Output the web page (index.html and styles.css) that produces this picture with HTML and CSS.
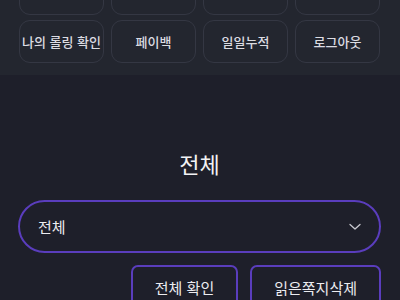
FILE: index.html
```html
<!DOCTYPE html>
<html lang="ko">
<head>
<meta charset="utf-8">
<link rel="stylesheet" href="styles.css">
</head>
<body>
<div class="menu">
  <div class="grid">
    <div class="item item-hidden"></div>
    <div class="item item-hidden"></div>
    <div class="item item-hidden"></div>
    <div class="item item-hidden"></div>
    <div class="item">나의 롤링 확인</div>
    <div class="item">페이백</div>
    <div class="item">일일누적</div>
    <div class="item">로그아웃</div>
  </div>
</div>
<div class="content">
  <h1 class="title">전체</h1>
  <div class="select">
    <span class="select-text">전체</span>
    <svg class="chevron" width="12" height="8" viewBox="0 0 12 8"><path d="M1 1.5 L6 6 L11 1.5" fill="none" stroke="#c8c8d0" stroke-width="1.3" stroke-linecap="round" stroke-linejoin="round"/></svg>
  </div>
  <div class="actions">
    <button class="btn">전체 확인</button>
    <button class="btn">읽은쪽지삭제</button>
  </div>
</div>
</body>
</html>
```
FILE: styles.css
```css
* { box-sizing: border-box; }
html, body {
  margin: 0;
  padding: 0;
  background: #1e1f2a;
  font-family: "Noto Sans CJK KR", "Noto Sans", sans-serif;
  color: #e6e6ea;
  overflow: hidden;
}
.menu {
  background: #23262f;
  padding: 0 20px 12px 19px;
}
.grid {
  display: grid;
  grid-template-columns: repeat(4, 1fr);
  column-gap: 7px;
  row-gap: 5px;
  margin-top: -28px;
}
.item {
  height: 43px;
  border: 1px solid #343743;
  border-radius: 11px;
  display: flex;
  align-items: center;
  justify-content: center;
  font-size: 13px;
  font-weight: 500;
  color: #dcdce2;
  white-space: nowrap;
}
.content {
  padding: 0 19px 0 18px;
}
.title {
  margin: 72px 0 0;
  font-size: 22px;
  font-weight: 400;
  line-height: 32px;
  text-align: center;
  color: #f2f2f4;
}
.select {
  margin-top: 21px;
  height: 53px;
  border: 2px solid #5a3dbd;
  border-radius: 27px;
  display: flex;
  align-items: center;
  justify-content: space-between;
  padding: 0 18px 0 18px;
}
.select-text {
  font-size: 15px;
  color: #ececf0;
}
.actions {
  margin-top: 12px;
  display: flex;
  justify-content: flex-end;
  gap: 12px;
}
.btn {
  background: transparent;
  border: 2px solid #5a3dbd;
  border-radius: 7px;
  height: 44px;
  padding: 10px 22px 0;
  font-family: inherit;
  font-size: 15px;
  color: #ececf0;
  display: flex;
  align-items: flex-start;
}
```
